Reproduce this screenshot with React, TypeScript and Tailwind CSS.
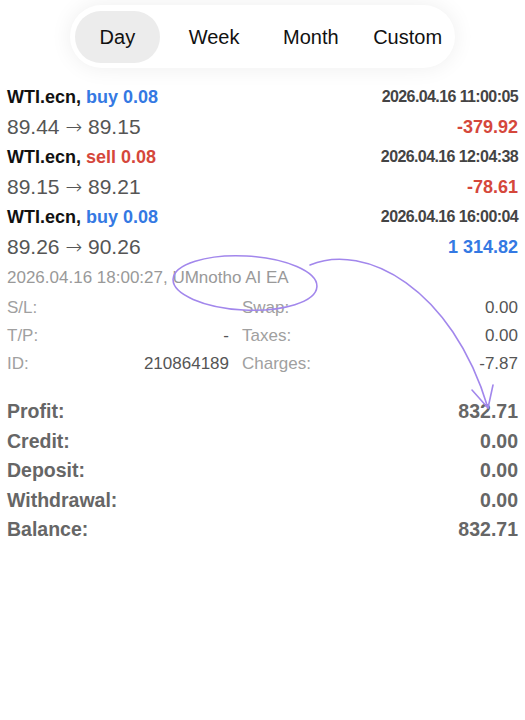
import { useState } from 'react';

const trades = [
  { side: 'buy', lots: '0.08', time: '2026.04.16 11:00:05', from: '89.44', to: '89.15', profit: '-379.92' },
  { side: 'sell', lots: '0.08', time: '2026.04.16 12:04:38', from: '89.15', to: '89.21', profit: '-78.61' },
  { side: 'buy', lots: '0.08', time: '2026.04.16 16:00:04', from: '89.26', to: '90.26', profit: '1 314.82' },
];

const summary = [
  { label: 'Profit:', value: '832.71' },
  { label: 'Credit:', value: '0.00' },
  { label: 'Deposit:', value: '0.00' },
  { label: 'Withdrawal:', value: '0.00' },
  { label: 'Balance:', value: '832.71' },
];

const periods = ['Day', 'Week', 'Month', 'Custom'];

export default function App() {
  const [period, setPeriod] = useState('Day');

  return (
    <div className="relative w-[525px] h-[720px] bg-white overflow-hidden font-['Liberation_Sans',Arial,sans-serif]">
      {/* Period tabs */}
      <div className="flex justify-start pl-[70px] pt-[5px]">
        <div className="flex items-center gap-[12px] h-[63px] px-[5px] w-[385px] rounded-full bg-white shadow-[0_0_22px_rgba(0,0,0,0.07)]">
          {periods.map(p => (
            <button
              key={p}
              onClick={() => setPeriod(p)}
              className={`w-[85px] h-[52px] rounded-full text-[20px] text-[#111] ${period === p ? 'bg-[#ececec]' : ''}`}
            >
              {p}
            </button>
          ))}
        </div>
      </div>

      {/* Trades */}
      <div className="mt-[14px] px-[7px]">
        {trades.map((t, i) => (
          <div key={i}>
            <div className="flex items-center justify-between h-[30px]">
              <div className="text-[18px] font-bold text-[#111]">
                WTI.ecn,{' '}
                <span className={t.side === 'buy' ? 'text-[#3479e3]' : 'text-[#d5473b]'}>
                  {t.side} {t.lots}
                </span>
              </div>
              <div className="text-[16px] font-bold text-[#444] tracking-[-0.6px]">
                {t.time}
              </div>
            </div>
            <div className="flex items-center justify-between h-[30px]">
              <div className="text-[21px] text-[#555]">
                {t.from}{' '}
                <span className="font-['DejaVu_Sans',sans-serif] font-extralight text-[20px]">→</span>{' '}
                {t.to}
              </div>
              <div className={`text-[18px] font-bold ${t.profit.startsWith('-') ? 'text-[#d5473b]' : 'text-[#3479e3]'}`}>
                {t.profit}
              </div>
            </div>
          </div>
        ))}

        {/* Details */}
        <div className="flex items-center h-[32px] text-[17px] text-[#999]">
          2026.04.16 18:00:27, UMnotho AI EA
        </div>
        <div className="grid grid-cols-[222px_1fr] gap-x-[13px] text-[17px]">
          <div className="flex items-center justify-between h-[28px]">
            <span className="text-[#a0a0a0]">S/L:</span>
            <span className="text-[#555]"></span>
          </div>
          <div className="flex items-center justify-between h-[28px]">
            <span className="text-[#a0a0a0]">Swap:</span>
            <span className="text-[#555]">0.00</span>
          </div>
          <div className="flex items-center justify-between h-[28px]">
            <span className="text-[#a0a0a0]">T/P:</span>
            <span className="text-[#555]">-</span>
          </div>
          <div className="flex items-center justify-between h-[28px]">
            <span className="text-[#a0a0a0]">Taxes:</span>
            <span className="text-[#555]">0.00</span>
          </div>
          <div className="flex items-center justify-between h-[28px]">
            <span className="text-[#a0a0a0]">ID:</span>
            <span className="text-[#555]">210864189</span>
          </div>
          <div className="flex items-center justify-between h-[28px]">
            <span className="text-[#a0a0a0]">Charges:</span>
            <span className="text-[#555]">-7.87</span>
          </div>
        </div>

        {/* Summary */}
        <div className="mt-[19px]">
          {summary.map(s => (
            <div key={s.label} className="flex items-center justify-between h-[29.5px] text-[19.5px] font-bold text-[#666]">
              <span>{s.label}</span>
              <span>{s.value}</span>
            </div>
          ))}
        </div>
      </div>

      {/* Hand-drawn annotation */}
      <svg className="absolute left-0 top-0 pointer-events-none" width="525" height="720" viewBox="0 0 525 720" fill="none">
        <ellipse cx="245" cy="283" rx="72" ry="27" transform="rotate(3 245 283)" stroke="#a287ec" strokeWidth="1.6" />
        <path d="M310 265 C 365 242, 452 288, 488 408" stroke="#a287ec" strokeWidth="1.6" strokeLinecap="round" />
        <path d="M472 390 L488 408 L493 385" stroke="#a287ec" strokeWidth="1.6" strokeLinecap="round" strokeLinejoin="round" />
      </svg>
    </div>
  );
}
